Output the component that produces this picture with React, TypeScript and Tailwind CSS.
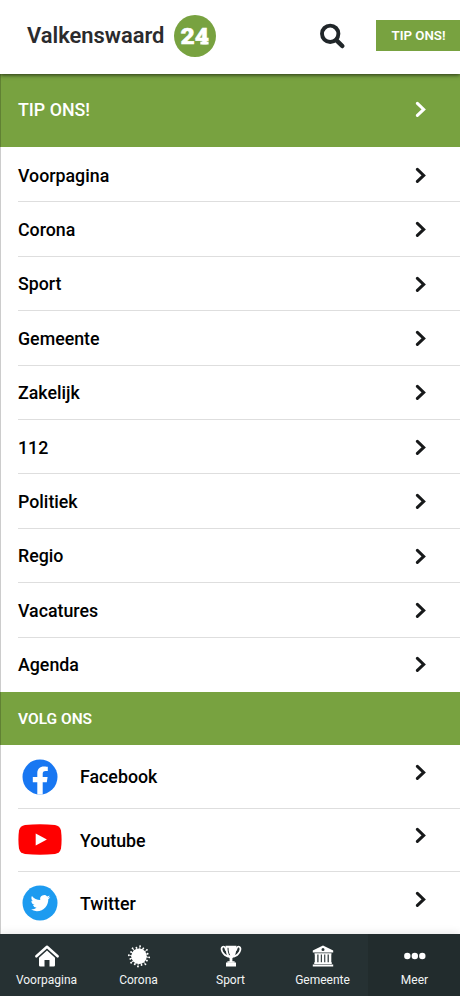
import { ReactNode } from "react";

const menuItems = [
  "Voorpagina",
  "Corona",
  "Sport",
  "Gemeente",
  "Zakelijk",
  "112",
  "Politiek",
  "Regio",
  "Vacatures",
  "Agenda",
];

const tabClasses = "flex flex-1 flex-col items-center pt-[10px] pl-px";

function Chevron({ className }: { className?: string }) {
  return (
    <svg className={`h-4 w-[11px] ${className}`} viewBox="0 0 11 16" fill="none" stroke="currentColor" strokeWidth="3" strokeLinecap="round">
      <path d="M2.400 2.400 L8.700 8.400 L2.400 14.400" />
    </svg>
  );
}

function FacebookIcon() {
  return (
    <svg className="h-9 w-9" viewBox="0 0 36 36">
      <circle cx="18" cy="18" r="17.5" fill="#1877f2" />
      <path fill="#fff" d="M15.3 35.3V23.2h-4.5v-5.1h4.5v-3.9c0-4.4 2.6-6.8 6.6-6.8 1.900 0 3.900.3 3.900.3V12h-2.200c-2.200 0-2.900 1.400-2.900 2.700v3.400h4.900l-.8 5.100h-4.100v12.100a18 18 0 0 1-5.400 0z" />
    </svg>
  );
}

function YoutubeIcon() {
  return (
    <svg className="h-[31px] w-11" viewBox="0 0 44 31">
      <path fill="#f00" d="M7 1Q22 -.3 37 1Q42 1.900 43 6.500Q44.200 15.500 43 24.500Q42 29.100 37 30Q22 31.300 7 30Q2 29.100 1 24.500Q-.2 15.500 1 6.500Q2 1.900 7 1z" />
      <path fill="#fff" d="M17.700 9.500v12l11.200-6z" />
    </svg>
  );
}

function TwitterIcon() {
  return (
    <svg className="h-9 w-9" viewBox="0 0 36 36">
      <circle cx="18" cy="18" r="17.5" fill="#1d9bf0" />
      <path
        fill="#fff"
        transform="translate(8.600 8.300) scale(.82)"
        d="M23.953 4.570a10 10 0 01-2.825.775 4.958 4.958 0 002.163-2.723c-.951.555-2.005.959-3.127 1.184a4.920 4.920 0 00-8.384 4.482C7.690 8.095 4.067 6.130 1.640 3.162a4.822 4.822 0 00-.666 2.475c0 1.710.870 3.213 2.188 4.096a4.904 4.904 0 01-2.228-.616v.060a4.923 4.923 0 003.946 4.827 4.996 4.996 0 01-2.212.085 4.936 4.936 0 004.604 3.417 9.867 9.867 0 01-6.102 2.105c-.390 0-.779-.023-1.170-.067a13.995 13.995 0 007.557 2.209c9.053 0 13.998-7.496 13.998-13.985 0-.210 0-.420-.015-.630A9.935 9.935 0 0024 4.590z"
      />
    </svg>
  );
}

function HomeIcon() {
  return (
    <svg className="h-6 w-6" viewBox="0 0 24 24">
      <path d="M1.400 12.300 12 2.800l10.600 9.500" fill="none" stroke="#fff" strokeWidth="2.500" strokeLinecap="round" strokeLinejoin="round" />
      <path d="M12 6.500l8 7.200v7.500a1.300 1.300 0 0 1-1.300 1.300h-4.200v-6.400h-5v6.400H5.300A1.300 1.300 0 0 1 4 21.200v-7.500z" fill="#fff" />
    </svg>
  );
}

function VirusIcon() {
  const spikes = Array.from({ length: 16 }, (_, i) => i * 22.5 + 6);
  return (
    <svg className="h-6 w-6" viewBox="0 0 24 24" fill="#fff">
      <circle cx="12" cy="12.300" r="7.800" />
      {spikes.map((angle, i) => (
        <g key={angle} transform={`rotate(${angle} 12 12.300)`}>
          <path d="M11.600 3h.8v3h-.8z" />
          <circle cx="12" cy={i % 2 ? 3.300 : 2.100} r=".95" />
        </g>
      ))}
    </svg>
  );
}

function TrophyIcon() {
  return (
    <svg className="h-6 w-6" viewBox="0 0 24 24" fill="#fff">
      <path d="M6.500 1.800h11c0 6-1 10.400-4.100 12.500v2.900h2.200v1.500H8.400v-1.500h2.200v-2.900C7.500 12.200 6.500 7.800 6.500 1.800z" />
      <path d="M7 6.600C6.300 2.800 4.700 2 3.500 2.900c-2.300 1.800-.2 8.100 6.200 10M17 6.600c.7-3.800 2.300-4.600 3.500-3.700 2.300 1.800.2 8.100-6.200 10" fill="none" stroke="#fff" strokeWidth="1.700" />
      <path d="M7 18.500h10v4H7z" />
      <path d="M9 3.800c.1 3.300.6 5.600 1.700 7.400" fill="none" stroke="#232e30" strokeWidth="1" />
    </svg>
  );
}

function BankIcon() {
  return (
    <svg className="h-6 w-6" viewBox="0 0 24 24" fill="#fff">
      <path fillRule="evenodd" d="M12 1.500 22.200 6.400v2H1.800v-2zM12 4a1.500 1.500 0 1 0 0 3 1.500 1.500 0 0 0 0-3z" />
      <path d="M3.500 9.200h17v1.300h-17zM3.800 10.500h2.500v8H3.800zM7.500 10.500h2.300v8H7.500zM10.900 10.500h2.300v8h-2.300zM14.300 10.500h2.300v8h-2.300zM17.800 10.500h2.500v8h-2.500zM3.200 18.200h17.600v1.700H3.200zM1.800 20.500h20.400v2H1.800z" />
    </svg>
  );
}

function DotsIcon() {
  return (
    <svg className="h-6 w-6" viewBox="0 0 24 24" fill="#fff">
      <circle cx="4.300" cy="12" r="3.200" />
      <circle cx="11.800" cy="12" r="3.200" />
      <circle cx="19.300" cy="12" r="3.200" />
    </svg>
  );
}

function SocialRow({ icon, label }: { icon: ReactNode; label: string }) {
  return (
    <a href="#" className="ml-[18px] flex h-[63.300px] shrink-0 items-center border-b border-[#dedede]">
      <span className="flex w-11 justify-center">{icon}</span>
      <span className="ml-[18px] flex-1 pt-[2px]">{label}</span>
      <Chevron className="mr-[34px] mb-[9px] text-[#17191a]" />
    </a>
  );
}

const tabs = [
  { label: "Voorpagina", icon: <HomeIcon /> },
  { label: "Corona", icon: <VirusIcon /> },
  { label: "Sport", icon: <TrophyIcon /> },
  { label: "Gemeente", icon: <BankIcon /> },
  { label: "Meer", icon: <DotsIcon />, active: true },
];

export default function App() {
  return (
    <div className="flex h-[996px] w-[460px] flex-col overflow-hidden bg-white font-[Roboto,sans-serif] text-black">
      <header className="z-10 flex h-[73.500px] shrink-0 items-center bg-white shadow-[0_1px_4px_rgba(0,0,0,0.7)]">
        <span className="ml-[27px] w-[147px] text-[21.900px] font-semibold text-[#2b2b2d]">Valkenswaard</span>
        <span className="mb-0.5 flex h-[42px] w-[42px] items-center justify-center rounded-full bg-[#78a240]">
          <svg className="h-[42px] w-[42px]" viewBox="0 0 42 42" fill="#fff">
            <text x="20.800" y="28.600" textAnchor="middle" textLength="28.500" lengthAdjust="spacingAndGlyphs" fontSize="22.500" fontWeight="900" stroke="#fff" strokeWidth=".5" className="font-[Roboto,sans-serif]">24</text>
            {/* slab foot of the 4 */}
            <path d="M26.300 26.600h8.300v2.900h-8.300z" />
          </svg>
        </span>
        <svg className="ml-[103px] mb-0.5 h-7 w-7" viewBox="0 0 28 28" fill="none" stroke="#202629">
          <circle cx="11.200" cy="11.800" r="8.200" strokeWidth="3.900" />
          <path d="M17.300 18.100 L23.300 24" strokeWidth="4.500" strokeLinecap="round" />
        </svg>
        <button className="mb-[3px] ml-auto h-[31px] w-[84px] bg-[#78a240] pt-px pl-px text-[13.300px] font-semibold text-white">TIP ONS!</button>
      </header>

      <main className="relative flex min-h-0 flex-1 flex-col overflow-hidden text-[17.800px] font-medium">
        <div className="flex h-[73.500px] shrink-0 items-center bg-[#78a240] pl-[18px] text-white">
          <span className="flex-1">TIP ONS!</span>
          <Chevron className="mr-[34px] mb-[2px]" />
        </div>
        <nav className="shrink-0 pt-px pl-[18px]">
          {menuItems.map((item) => (
            <a key={item} href="#" className="flex h-[54.420px] items-center border-b border-[#dedede] last:border-white">
              <span className="flex-1 pt-[2.500px]">{item}</span>
              <Chevron className="mr-[34px] text-[#17191a]" />
            </a>
          ))}
        </nav>
        <h2 className="flex h-[53px] shrink-0 items-center bg-[#78a240] pt-[2px] pl-[18px] text-[15.500px] font-semibold text-white">
          VOLG ONS
        </h2>
        <div className="pt-[0.400px]">
          <SocialRow icon={<FacebookIcon />} label="Facebook" />
          <SocialRow icon={<YoutubeIcon />} label="Youtube" />
          <SocialRow icon={<TwitterIcon />} label="Twitter" />
        </div>
        <div className="pointer-events-none absolute inset-y-0 left-0 w-px bg-black/20" />
      </main>

      <footer className="z-10 flex h-[62.500px] shrink-0 bg-[#263133] text-[12px] text-[#f2f5f5] shadow-[0_0_9px_rgba(0,0,0,0.12)]">
        {tabs.map(({ label, icon, active }) => (
          <a key={label} href="#" className={`${tabClasses} ${active ? "bg-[#222c2d]" : ""}`}>
            {icon}
            <span className="mt-[3px]">{label}</span>
          </a>
        ))}
      </footer>
    </div>
  );
}
